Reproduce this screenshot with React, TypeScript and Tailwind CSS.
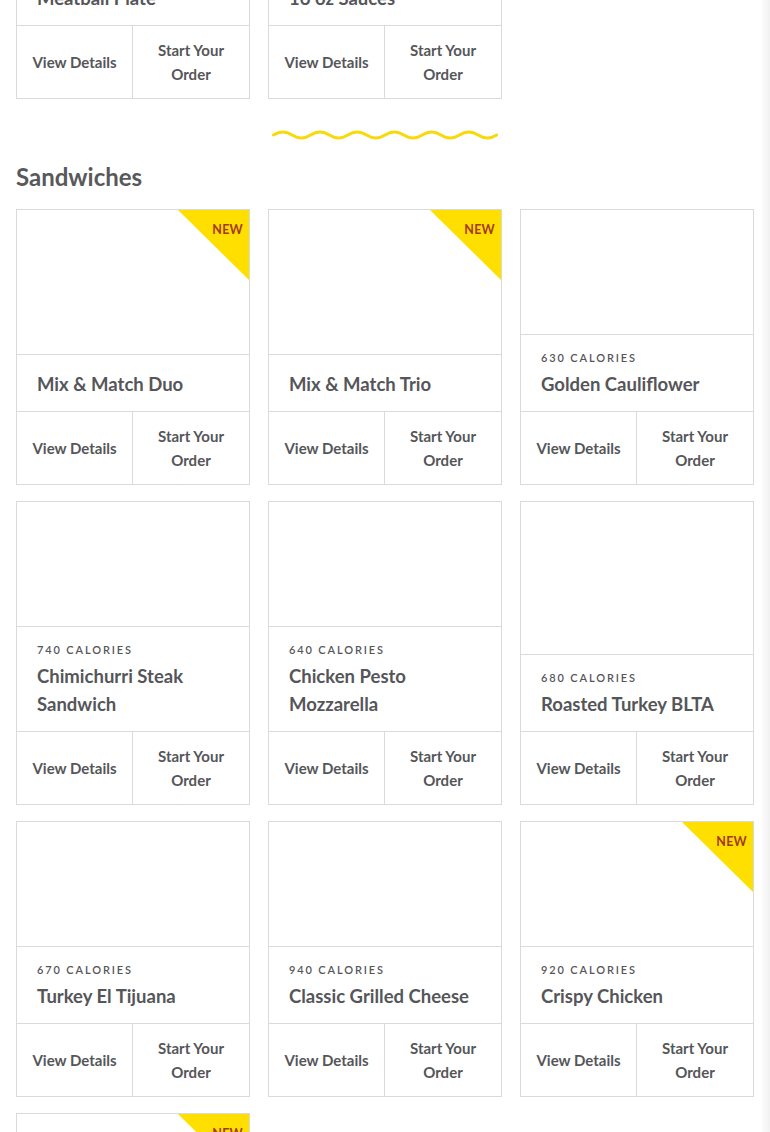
import type { ReactNode } from "react";

type Item = {
  name: string;
  calories?: number;
  isNew?: boolean;
};

const previous: Item[] = [{ name: "Meatball Plate" }, { name: "16 oz Sauces" }];

const sandwiches: Item[] = [
  { name: "Mix & Match Duo", isNew: true },
  { name: "Mix & Match Trio", isNew: true },
  { name: "Golden Cauliflower", calories: 630 },
  { name: "Chimichurri Steak Sandwich", calories: 740 },
  { name: "Chicken Pesto Mozzarella", calories: 640 },
  { name: "Roasted Turkey BLTA", calories: 680 },
  { name: "Turkey El Tijuana", calories: 670 },
  { name: "Classic Grilled Cheese", calories: 940 },
  { name: "Crispy Chicken", calories: 920, isNew: true },
  { name: "Steak & White Cheddar", calories: 780, isNew: true },
];

function NewBadge() {
  return (
    <div className="absolute top-0 right-0 w-[71px] h-[70px] bg-[#ffdf00] [clip-path:polygon(0_0,100%_0,100%_100%)]">
      <span className="absolute top-[12px] right-[6px] text-[12.5px] leading-4 font-bold tracking-[0.02em] text-[#a33a1f]">
        NEW
      </span>
    </div>
  );
}

function MenuCard({ item }: { item: Item }) {
  return (
    <div className="relative flex flex-col bg-white border border-[#dadada]">
      <div className="flex-1 min-h-[124px]" />
      {item.isNew && <NewBadge />}
      <div className="border-t border-[#dadada] px-5 pt-[15px] pb-[13px]">
        {item.calories !== undefined && (
          <div className="mb-1 text-[11px] leading-4 font-semibold tracking-[0.17em] text-[#555659]">
            {item.calories} CALORIES
          </div>
        )}
        <h3 className="text-[18.5px] leading-7 font-bold text-[#555659] pr-2">{item.name}</h3>
      </div>
      <div className="grid grid-cols-2 h-[73px] border-t border-[#dadada] text-[15px] leading-6 font-bold text-[#555659] text-center">
        <button className="flex items-center justify-center border-r border-[#dadada]">View Details</button>
        <button className="flex items-center justify-center px-3">
          Start Your
          <br />
          Order
        </button>
      </div>
    </div>
  );
}

function CardGrid({ items }: { items: Item[] }) {
  return (
    <div className="grid grid-cols-3 gap-x-[18px] gap-y-[16px]">
      {items.map((item) => (
        <MenuCard key={item.name} item={item} />
      ))}
    </div>
  );
}

function Squiggle() {
  // sine-ish wave made of quadratic segments
  const half = 18.6;
  const x0 = 1.5;
  let d = `M${x0} 6 Q${(x0 + half / 2).toFixed(1)} 0 ${(x0 + half).toFixed(1)} 6`;
  for (let i = 2; i <= 12; i++) d += ` T${(x0 + half * i).toFixed(1)} 6`;
  return (
    <div className="flex justify-center mt-[30px]">
      <svg width="226" height="12" viewBox="0 0 226 12" fill="none">
        <path d={d} stroke="#f7d90c" strokeWidth="3" strokeLinecap="round" />
      </svg>
    </div>
  );
}

function Section({ title, children }: { title: string; children: ReactNode }) {
  return (
    <section>
      <h2 className="mt-[20px] mb-[16px] text-[24px] leading-8 font-bold text-[#58595b]">{title}</h2>
      {children}
    </section>
  );
}

export default function App() {
  return (
    <div className="flex h-[1132px] overflow-hidden bg-white" style={{ fontFamily: "Lato, 'Open Sans', sans-serif" }}>
      <main className="w-[762px] pl-4 pr-2 -mt-[157px]">
        <CardGrid items={previous} />
        <Squiggle />
        <Section title="Sandwiches">
          <CardGrid items={sandwiches} />
        </Section>
      </main>
      <div className="w-2 bg-gradient-to-r from-[#fbfbfb] to-[#f1f1f1]" />
    </div>
  );
}
